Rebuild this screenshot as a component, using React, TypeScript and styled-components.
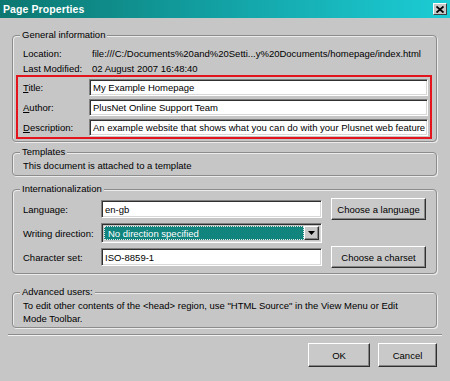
import React from "react";
import styled, { createGlobalStyle } from "styled-components";

const GlobalStyle = createGlobalStyle`
  html, body { margin: 0; padding: 0; background: #c6c6c6; }
  body { font-family: "Liberation Sans", Arial, sans-serif; font-size: 9.5px; color: #000; }
`;

const FACE = "#c6c6c6";

const Window = styled.div`
  width: 450px;
  height: 381px;
  background: ${FACE};
  display: flex;
  flex-direction: column;
  box-sizing: border-box;
  overflow: hidden;
`;

const TitleBar = styled.div`
  height: 18px;
  flex: none;
  display: flex;
  align-items: center;
  justify-content: space-between;
  padding: 0 3px 0 3px;
  background: linear-gradient(to right, #0c7770 0%, #129ea0 45%, #1ccdd6 100%);
`;

const TitleText = styled.span`
  color: #fff;
  font-weight: bold;
  font-size: 10.5px;
  letter-spacing: 0.1px;
`;

const CloseButton = styled.div`
  width: 14px;
  height: 12px;
  box-sizing: border-box;
  background: #c8c8c8;
  border: 1px solid;
  border-color: #fff #404040 #404040 #fff;
  display: flex;
  align-items: center;
  justify-content: center;
`;

const Body = styled.div`
  display: flex;
  flex-direction: column;
  padding: 0 13px 0 12px;
`;

const Group = styled.fieldset<{ $top: number }>`
  margin: ${(p) => p.$top}px 0 0 0;
  padding: 0 4px 0 3px;
  border: 1px solid #8c8c8c;
  border-radius: 4px;
  box-shadow: 1px 1px 0 #ececec, inset 1px 1px 0 #ececec;
  min-width: 0;
`;

const Legend = styled.legend`
  margin-left: 4px;
  padding: 0 2px;
  line-height: 12px;
  background: ${FACE};
  font-size: 9.5px;
`;

const InfoGrid = styled.div`
  display: grid;
  grid-template-columns: 69px 1fr;
  grid-auto-rows: 14px;
  row-gap: 1px;
  align-items: center;
  padding: 5px 0 0 7px;
  white-space: nowrap;
`;

const Highlight = styled.div`
  border: 2px solid #e3141b;
  padding: 2px 2px 1px 5px;
  display: grid;
  grid-template-columns: 66px 1fr;
  grid-auto-rows: 17px;
  row-gap: 3px;
  align-items: center;
  margin-bottom: 2px;
`;

const Underline = styled.span`
  text-decoration: underline;
`;

const TextInput = styled.div<{ $h?: number }>`
  height: ${(p) => p.$h ?? 17}px;
  box-sizing: border-box;
  background: #fff;
  border: 1px solid;
  border-color: #808080 #fff #fff #808080;
  box-shadow: inset 1px 1px 0 #303030, inset -1px -1px 0 #d8d8d8;
  padding: 0 3px 0 3px;
  display: flex;
  align-items: center;
  white-space: nowrap;
  overflow: hidden;
`;

const PlainText = styled.div<{ $pt: number; $pb: number }>`
  padding: ${(p) => p.$pt}px 0 ${(p) => p.$pb}px 7px;
  line-height: 13px;
`;

const IntlGrid = styled.div`
  display: grid;
  grid-template-columns: 78px 221px 1fr;
  grid-template-rows: 22px 22px 22px;
  row-gap: 2px;
  align-items: center;
  padding: 3px 6px 5px 7px;
`;

const PushButton = styled.div<{ $w: number; $h: number }>`
  width: ${(p) => p.$w}px;
  height: ${(p) => p.$h}px;
  box-sizing: border-box;
  background: #c9c9c9;
  border: 1px solid;
  border-color: #fff #303030 #303030 #fff;
  box-shadow: inset -1px -1px 0 #858585;
  display: flex;
  align-items: center;
  justify-content: center;
  white-space: nowrap;
  font-size: 9.5px;
  justify-self: end;
`;

const Select = styled.div`
  height: 20px;
  box-sizing: border-box;
  border: 1px solid;
  border-color: #808080 #fff #fff #808080;
  box-shadow: inset 1px 1px 0 #303030, inset -1px -1px 0 #d8d8d8;
  padding: 2px;
  display: flex;
`;

const SelectValue = styled.div`
  flex: 1;
  background: #12847e;
  color: #fff;
  outline: 1px dotted #e8e8e8;
  outline-offset: -1px;
  display: flex;
  align-items: center;
  padding-left: 4px;
  font-size: 9.5px;
`;

const SelectArrow = styled.div`
  width: 15px;
  box-sizing: border-box;
  background: #c9c9c9;
  border: 1px solid;
  border-color: #fff #303030 #303030 #fff;
  box-shadow: inset -1px -1px 0 #858585;
  display: flex;
  align-items: center;
  justify-content: center;
`;

const Separator = styled.div`
  margin: 6px -5px 0 -4px;
  height: 0;
  border-top: 1px solid #8c8c8c;
  border-bottom: 1px solid #f2f2f2;
`;

const Footer = styled.div`
  display: flex;
  justify-content: flex-end;
  gap: 8px;
  padding-top: 7px;
`;

export default function App() {
  return (
    <>
      <GlobalStyle />
      <Window>
        <TitleBar>
          <TitleText>Page Properties</TitleText>
          <CloseButton>
            <svg width="8" height="7" viewBox="0 0 8 7">
              <path d="M0.5 0.5 L7.5 6.5 M7.5 0.5 L0.5 6.5" stroke="#000" strokeWidth="1.8" />
            </svg>
          </CloseButton>
        </TitleBar>
        <Body>
          <Group $top={11}>
            <Legend>General information</Legend>
            <InfoGrid>
              <span>Location:</span>
              <span>file:///C:/Documents%20and%20Setti...y%20Documents/homepage/index.html</span>
              <span>Last Modified:</span>
              <span>02 August 2007 16:48:40</span>
            </InfoGrid>
            <Highlight>
              <span>
                <Underline>T</Underline>itle:
              </span>
              <TextInput>My Example Homepage</TextInput>
              <span>
                <Underline>A</Underline>uthor:
              </span>
              <TextInput>PlusNet Online Support Team</TextInput>
              <span>
                <Underline>D</Underline>escription:
              </span>
              <TextInput>An example website that shows what you can do with your Plusnet web feature</TextInput>
            </Highlight>
          </Group>

          <Group $top={4}>
            <Legend>Templates</Legend>
            <PlainText $pt={1} $pb={3}>This document is attached to a template</PlainText>
          </Group>

          <Group $top={7}>
            <Legend>Internationalization</Legend>
            <IntlGrid>
              <span>Language:</span>
              <TextInput $h={18}>en-gb</TextInput>
              <PushButton $w={95} $h={22}>Choose a language</PushButton>
              <span>Writing direction:</span>
              <Select>
                <SelectValue>No direction specified</SelectValue>
                <SelectArrow>
                  <svg width="7" height="4" viewBox="0 0 7 4">
                    <path d="M0 0 H7 L3.5 4 Z" fill="#000" />
                  </svg>
                </SelectArrow>
              </Select>
              <span />
              <span>Character set:</span>
              <TextInput $h={18}>ISO-8859-1</TextInput>
              <PushButton $w={95} $h={22}>Choose a charset</PushButton>
            </IntlGrid>
          </Group>

          <Group $top={12}>
            <Legend>Advanced users:</Legend>
            <PlainText $pt={1} $pb={2}>
              To edit other contents of the &lt;head&gt; region, use "HTML Source" in the View Menu or Edit
              <br />
              Mode Toolbar.
            </PlainText>
          </Group>

          <Separator />
          <Footer>
            <PushButton $w={62} $h={24}>OK</PushButton>
            <PushButton $w={59} $h={24}>Cancel</PushButton>
          </Footer>
        </Body>
      </Window>
    </>
  );
}
